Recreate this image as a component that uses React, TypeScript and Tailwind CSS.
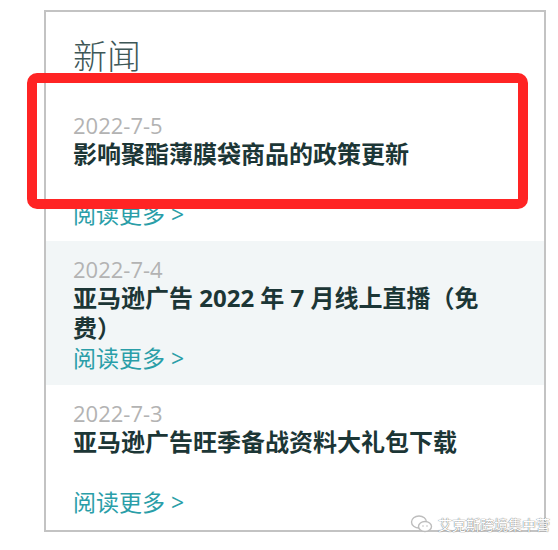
import React from "react";

const items = [
  { date: "2022-7-5", title: "影响聚酯薄膜袋商品的政策更新", shaded: false },
  { date: "2022-7-4", title: "亚马逊广告 2022 年 7 月线上直播（免费）", shaded: true },
  { date: "2022-7-3", title: "亚马逊广告旺季备战资料大礼包下载", shaded: false },
];

function WeChatMark() {
  return (
    <svg width="24" height="20" viewBox="0 0 24 20" fill="none" stroke="#bdbdbd" strokeWidth="1.4">
      <ellipse cx="9" cy="8" rx="7.5" ry="6" fill="#fff" />
      <ellipse cx="15" cy="12.5" rx="6.5" ry="5" fill="#fff" />
      <circle cx="13" cy="12" r="0.8" fill="#bdbdbd" stroke="none" />
      <circle cx="17" cy="12" r="0.8" fill="#bdbdbd" stroke="none" />
    </svg>
  );
}

export default function App() {
  return (
    <div className="relative w-[558px] h-[550px] bg-white overflow-hidden font-['Open_Sans','Noto_Sans_CJK_SC',sans-serif]">
      <div className="ml-[44px] mt-[10px] w-[502px] h-[522px] border-2 border-[#c3c3c3] flex flex-col">
        <h2 className="pl-[27px] pt-[24px] pb-[21px] text-[34px] leading-[40px] font-light text-[#3e5757]">
          新闻
        </h2>
        {items.map((item) => (
          <div
            key={item.date}
            className={`pl-[27px] pr-[60px] pt-[14px] pb-[12px] ${item.shaded ? "bg-[#f2f6f7]" : "bg-white"}`}
          >
            <div className="text-[22px] leading-[28px] text-[#b3b3b3]">{item.date}</div>
            <div className="min-h-[60px] text-[24px] leading-[30px] font-bold text-[#1c3636]">
              {item.title}
            </div>
            <div className="text-[23px] leading-[30px] text-[#2a9ea8]">阅读更多 &gt;</div>
          </div>
        ))}
      </div>

      <div className="absolute left-[27px] top-[73px] w-[501px] h-[136px] border-[10px] border-[#ff2424] rounded-[10px]" />

      <div className="absolute right-[8px] top-[514px] flex items-center gap-[4px]">
        <WeChatMark />
        <span className="text-[14px] leading-[18px] text-white font-['Noto_Sans_CJK_SC',sans-serif] [text-shadow:0_0_1px_#777,0_0_1px_#777]">
          艾克斯跨境集中营
        </span>
      </div>
    </div>
  );
}
